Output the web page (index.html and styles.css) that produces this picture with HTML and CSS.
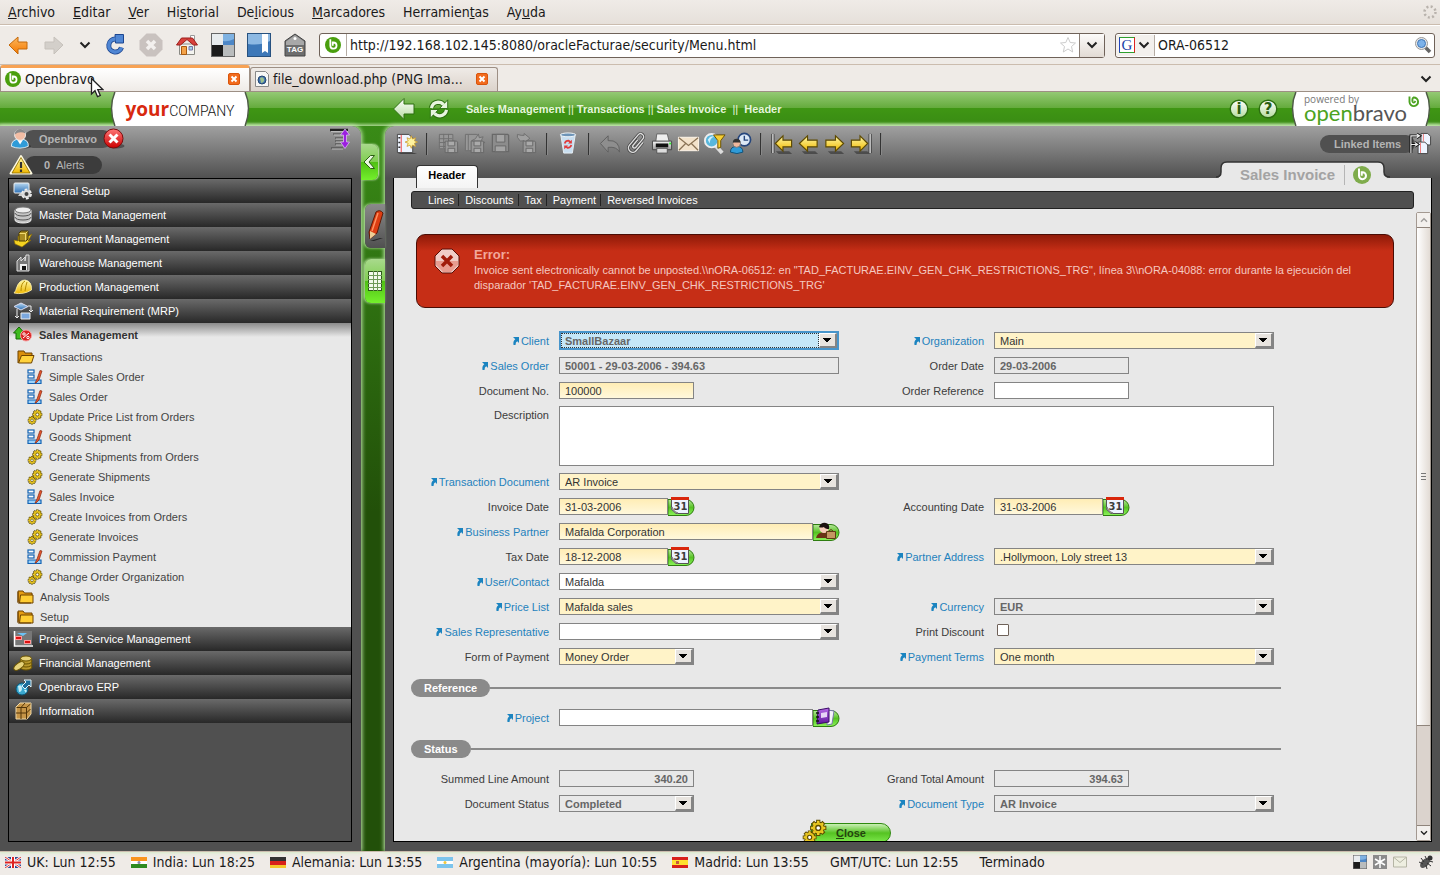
FILE: index.html
```html
<!DOCTYPE html>
<html lang="es">
<head>
    <meta charset="UTF-8">
    <meta name="viewport" content="width=device-width, initial-scale=1.0">
    <title>Openbravo</title>
    <link rel="stylesheet" href="styles.css">
</head>
<body>

    <!-- Icon sprite -->
    <svg class="sprite" width="0" height="0" aria-hidden="true">
        <defs>
            <linearGradient id="gOrange" x1="0" y1="0" x2="0" y2="1"><stop offset="0" stop-color="#fcb65c"/><stop offset="1" stop-color="#f57900"/></linearGradient>
            <linearGradient id="gBlue" x1="0" y1="0" x2="0" y2="1"><stop offset="0" stop-color="#b8d8f2"/><stop offset="1" stop-color="#2c6fb5"/></linearGradient>
            <linearGradient id="gYellow" x1="0" y1="0" x2="0" y2="1"><stop offset="0" stop-color="#fff9a8"/><stop offset="1" stop-color="#f0b800"/></linearGradient>
            <linearGradient id="gGreen" x1="0" y1="0" x2="0" y2="1"><stop offset="0" stop-color="#b9e79d"/><stop offset=".5" stop-color="#55c322"/><stop offset="1" stop-color="#8df45c"/></linearGradient>
            <linearGradient id="gGrey" x1="0" y1="0" x2="0" y2="1"><stop offset="0" stop-color="#f8f8f8"/><stop offset="1" stop-color="#9a9a9a"/></linearGradient>
            <linearGradient id="gRed" x1="0" y1="0" x2="0" y2="1"><stop offset="0" stop-color="#f77"/><stop offset="1" stop-color="#c00"/></linearGradient>
            <linearGradient id="gMint" x1="0" y1="0" x2="0" y2="1"><stop offset="0" stop-color="#fff"/><stop offset="1" stop-color="#b5dba0"/></linearGradient>
            <linearGradient id="gPurple" x1="0" y1="0" x2="0" y2="1"><stop offset="0" stop-color="#b86be8"/><stop offset="1" stop-color="#5f169c"/></linearGradient>
            <g id="disk" fill="#989898" stroke="#686868"><path d="M.5.5h12l1 1v11H.5z"/><path d="M3.500.5h7v5h-7zM3.500 8h7v4.500h-7z" fill="#aaa"/></g>
            <g id="cog">
                <path d="M-5 0H5M0-5V5M-3.500-3.500l7 7M3.500-3.500l-7 7" stroke="#5d4a00" stroke-width="2.600"/><circle r="4" fill="#5d4a00"/>
                <path d="M-4.400 0h8.800M0-4.400v8.800M-3-3l6 6M3-3l-6 6" stroke="#efcf2c" stroke-width="1.500"/><circle r="3.400" fill="#e6c31f"/>
                <circle r="1.500" fill="#fff" stroke="#5d4a00" stroke-width=".8"/>
            </g>
        </defs>

        <symbol id="ob" viewBox="0 0 18 18">
            <circle cx="9" cy="9" r="9" fill="currentColor"/>
            <path d="M6 2.500v7.300a3.500 3.500 0 1 0 3.500-3.600h-.8v3.600" fill="none" stroke="#fff" stroke-width="2"/>
        </symbol>
        <symbol id="chevron" viewBox="0 0 12 8"><path d="M1.500 1.500 6 6l4.500-4.500" fill="none" stroke="#222" stroke-width="2"/></symbol>
        <symbol id="close-tab" viewBox="0 0 12 12">
            <rect x=".5" y=".5" width="11" height="11" rx="1.500" fill="#f26b1d" stroke="#d9540b"/>
            <path d="m3.500 3.500 5 5m0-5-5 5" stroke="#fff" stroke-width="2"/>
        </symbol>
        <symbol id="nav-back" viewBox="0 0 24 24"><path d="M3 12 12 4v5h9v7h-9v5z" fill="url(#gOrange)" stroke="#c4690b"/></symbol>
        <symbol id="nav-forward" viewBox="0 0 24 24"><path d="M21 12 12 4v5H3v7h9v5z" fill="#d3cfca" stroke="#c6c1bb"/></symbol>
        <symbol id="nav-reload" viewBox="0 0 24 24">
            <path d="M18.500 14.500a6.500 6.500 0 1 1-6-8.500" fill="none" stroke="#1d4690" stroke-width="5"/>
            <path d="m12 1.500 8.500 0v8.500h-8z" fill="#4f86d4" stroke="#1d4690"/>
            <path d="M18.500 14.500a6.500 6.500 0 1 1-6-8.500" fill="none" stroke="#4f86d4" stroke-width="3.400"/>
        </symbol>
        <symbol id="nav-stop" viewBox="0 0 24 24">
            <path d="M7.500.5h9l7 7v9l-7 7h-9l-7-7v-9z" fill="#c9c2bf"/>
            <path d="m8 8 8 8m0-8-8 8" stroke="#f3f0ee" stroke-width="3.500"/>
        </symbol>
        <symbol id="nav-home" viewBox="0 0 24 24">
            <path d="M4.500 11h15v10.500h-15z" fill="#f4f4f0" stroke="#8a8a84"/>
            <path d="M15.500 2.500h4v6h-4z" fill="#fff" stroke="#999"/>
            <path d="m1.500 12 5-7h11l5 7h-4l-6.500-5.500L5.500 12z" fill="#d8413c" stroke="#9c1f1c"/>
            <path d="M6.500 13.500h5v8h-5z" fill="#f4a34a" stroke="#a85a10"/>
            <path d="M14 13.500h3.500v3.500H14z" fill="#9fd3e8" stroke="#77a"/>
        </symbol>
        <symbol id="delicious" viewBox="0 0 24 24">
            <rect width="24" height="24" fill="#666"/>
            <path d="M1 1h11v11H1z" fill="#e8ecee"/><path d="M12 1h11v11H12z" fill="#4d87c7"/><path d="M12 1h11v5q-6 3-11 2z" fill="#7fb2e2"/>
            <path d="M1 12h11v11H1z" fill="#1c1c1c"/><path d="M12 12h11v11H12z" fill="#b9bcbd"/>
        </symbol>
        <symbol id="bookmark" viewBox="0 0 24 24">
            <rect x=".5" y=".5" width="23" height="23" fill="#3d78b8" stroke="#27517f"/>
            <path d="M1 1h22v7q-10 5-22 3z" fill="#8db9e3"/>
            <path d="M15 1h6v19l-3-2-3 2z" fill="#fff"/>
        </symbol>
        <symbol id="tag" viewBox="0 0 24 24">
            <path d="M2 8 12 1l10 7v15H2z" fill="#6e6e6e" stroke="#444"/>
            <path d="M3 8.500 12 2l9 6.500V12H3z" fill="#a8a8a8"/><circle cx="12" cy="5.500" r="1.500" fill="#fff"/>
        </symbol>
        <symbol id="star" viewBox="0 0 18 18"><path d="m9 1.500 2.200 5 5.300.5-4 3.500 1.200 5.500L9 13l-4.700 3 1.200-5.500-4-3.500 5.300-.5z" fill="#fff" stroke="#ccc"/></symbol>
        <symbol id="magnifier" viewBox="0 0 18 18">
            <path d="m11 11 5 5" stroke="#666" stroke-width="3.500"/>
            <circle cx="7.500" cy="7.500" r="6" fill="#e8e8e8" stroke="#999"/><circle cx="7.500" cy="7.500" r="4" fill="#7cb2ea" stroke="#3e75b5"/>
        </symbol>
        <symbol id="png" viewBox="0 0 14 16">
            <path d="M.5.5h10l3 3v12H.5z" fill="#f7f7f5" stroke="#888"/><circle cx="7" cy="9" r="4" fill="#4173b0" stroke="#23466f"/><path d="M5 7q3-2 4 1t-3 4z" fill="#9cc08c"/>
        </symbol>
        <symbol id="spinner" viewBox="0 0 16 16">
            <circle cx="8" cy="8" r="5.500" fill="none" stroke="#b8b2ac" stroke-width="2.500" stroke-dasharray="2 2.320"/>
        </symbol>
        <symbol id="cursor" viewBox="0 0 14 21"><path d="M1.500 1.500v15.500l3.500-3.300 2.500 6 2.800-1.200-2.500-5.800H13z" fill="#fff" stroke="#222" stroke-width="1.300"/></symbol>

        <!-- Application header -->
        <symbol id="app-back" viewBox="0 0 24 24"><path d="M1.500 12 12 1.500v5.500h10v10H12v5.500z" fill="url(#gMint)" stroke="#2c6e10"/></symbol>
        <symbol id="app-refresh" viewBox="0 0 24 24">
            <g fill="none" stroke="#2c6e10" stroke-width="5.500"><path d="M3.500 11Q5 5 11 4.500q4 0 6 3M20.500 13Q19 19 13 19.500q-4 0-6-3"/></g>
            <path d="M21.500 2v9.500h-9zM2.500 22v-9.500h9z" fill="#e8f5df" stroke="#2c6e10"/>
            <g fill="none" stroke="#e8f5df" stroke-width="3.500"><path d="M3.800 11Q5 5 11 4.500q4 0 6 3M20.200 13Q19 19 13 19.500q-4 0-6-3"/></g>
        </symbol>
        <symbol id="round" viewBox="0 0 20 20"><circle cx="10" cy="10" r="8.800" fill="url(#gMint)" stroke="#2c6e10" stroke-width="1.400"/></symbol>
        <symbol id="logo-shape" viewBox="0 0 142 35">
            <path d="M4 0h134q7 16 0 35H4Q-3 16 4 0z" fill="#fff"/><path d="M4 0q-7 16 0 35M138 0q7 16 0 35" fill="none" stroke="#4c5a44" stroke-width="1.500"/>
        </symbol>
        <symbol id="swirl" viewBox="0 0 12 12"><path d="M1.500.5v5.500a4.300 4.300 0 1 0 4-4.500q-1.500.8-1 4 1 2.500 3-.5" fill="none" stroke="#4ca321" stroke-width="1.900"/></symbol>

        <!-- Left panel -->
        <symbol id="user" viewBox="0 0 24 24">
            <ellipse cx="14" cy="20" rx="9" ry="2.500" fill="#222" opacity=".5"/>
            <path d="M1.500 20q0-8 9.500-8t9 8q-9 4-18.500 0z" fill="#2f9bd8" stroke="#e8f4fb"/>
            <path d="m8 13 3 5 3-5z" fill="#fff"/>
            <circle cx="11" cy="7.500" r="6" fill="#f3bda4" stroke="#eee"/><path d="M5 7q1-6 6-6t6 5q-6-3-12 1z" fill="#8a8a8a"/>
        </symbol>
        <symbol id="logout" viewBox="0 0 22 22">
            <ellipse cx="13" cy="18" rx="8.500" ry="2.500" fill="#222" opacity=".5"/>
            <circle cx="10.500" cy="10.500" r="9.500" fill="url(#gRed)" stroke="#7c0c0c"/><path d="m6.500 6.500 8 8m0-8-8 8" stroke="#fff" stroke-width="3"/>
        </symbol>
        <symbol id="warning" viewBox="0 0 24 22">
            <path d="M12 2 22.500 19.500h-21z" fill="url(#gYellow)" stroke="#fffbe0" stroke-width="2" stroke-linejoin="round"/>
            <path d="M12 3.500 21 19H3z" fill="url(#gYellow)" stroke="#8a6a00" stroke-width=".8"/>
            <path d="M12 8v6m0 1.500V18" stroke="#333" stroke-width="2.200"/>
        </symbol>
        <symbol id="collapse-menu" viewBox="0 0 22 22">
            <path d="M1 2h18" stroke="#222" stroke-width="2.500"/><path d="M4 6h9M6 10h8M6 13h8M6 16h8M2 20h12" stroke="#444"/><path d="M2 3.500h17M5 7h8M7 11h7M7 14h7M7 17h7M3 21h11" stroke="#bbb"/>
            <path d="m16 1 4.500 6H17.500v7h3L16 20.500 11.500 14h3V7h-3z" fill="#9b1fe0" stroke="#e3c4f7" stroke-width=".7"/>
        </symbol>
        <symbol id="m-setup" viewBox="0 0 20 18">
            <rect x="1" y="1" width="15" height="10" rx="1" fill="url(#gBlue)" stroke="#eee"/><path d="M5 14h6l-1-3H7z" fill="#ccc"/>
            <circle cx="13.500" cy="12" r="3.200" fill="none" stroke="#eee" stroke-width="4.500" stroke-dasharray="2 1.350"/><circle cx="13.500" cy="12" r="3" fill="#444" stroke="#ddd" stroke-width="2"/>
        </symbol>
        <symbol id="m-data" viewBox="0 0 20 18">
            <path d="M2 4v10c0 4 16 4 16 0V4z" fill="#c5c5c5" stroke="#eee"/><path d="M2 7c0 4 16 4 16 0M2 11c0 4 16 4 16 0" fill="none" stroke="#555"/>
            <ellipse cx="10" cy="4" rx="8" ry="3" fill="#eee" stroke="#777"/>
        </symbol>
        <symbol id="m-procure" viewBox="0 0 20 18">
            <path d="m1 10 4 1V6h11l3-2-4 7 3-1-9 7-7-3z" fill="#f4d321" stroke="#8a6800" stroke-width=".6"/>
            <path d="m6 3 2-2h7v8l-2 2H6z" fill="#a98c20" stroke="#4b3b00"/><path d="M6.500 3.500h6l2-2m-2 2v7" fill="none" stroke="#f1dc70"/>
        </symbol>
        <symbol id="m-warehouse" viewBox="0 0 20 18">
            <path d="M4 7 8 3v4l4-4V7l1-6h3v16H4z" fill="#777" stroke="#ddd"/><path d="M7 10h7v6H7z" fill="#eee"/><path d="M9 12h4v4H9z" fill="#111"/>
        </symbol>
        <symbol id="m-production" viewBox="0 0 20 18">
            <path d="M1 15q2-2 2.500-5Q6 2 12 2q7 1 6.500 10-8 5-17.500 3z" fill="url(#gYellow)" stroke="#fff3b0" stroke-width=".8"/>
            <path d="M8 13q0-8 4-10M12 13q1-6 2-9" fill="none" stroke="#b48a00"/>
        </symbol>
        <symbol id="m-mrp" viewBox="0 0 20 18">
            <path d="m8 1 7 3.500L8 8 1 4.500z" fill="url(#gBlue)" stroke="#dde"/><path d="M8 11h9v6H8z" fill="#7ba8df" stroke="#eee"/>
            <path d="M4 7v9m-2-2 2 2 2-2M15 4h3v6m-2-2 2 2 2-2" fill="none" stroke="#eee"/>
        </symbol>
        <symbol id="m-sales" viewBox="0 0 20 18">
            <path d="m6 1 5.500 6H9v6H3V7H.5z" fill="#3ebb1e" stroke="#176a05"/>
            <circle cx="13" cy="9.500" r="5.500" fill="#d92424" stroke="#f6a0a0"/><path d="m10 12 6-5" stroke="#fff"/><circle cx="11" cy="8" r="1.200" fill="none" stroke="#fff"/><circle cx="15" cy="11.500" r="1.200" fill="none" stroke="#fff"/>
        </symbol>
        <symbol id="m-project" viewBox="0 0 20 18">
            <path d="M2 1h17v14H2z" fill="#777"/><path d="M1.500 1v15H20" fill="none" stroke="#fff" stroke-width="1.500"/><path d="M4 3h10l-4 3z" fill="#6cc2f5"/>
            <path d="M2 8h7M11 12h7" stroke="#f99" stroke-width="4"/><path d="M3 8h5M12 12h5" stroke="#d11" stroke-width="2"/>
        </symbol>
        <symbol id="m-finance" viewBox="0 0 20 18">
            <g fill="#b8982c" stroke="#6a5300"><ellipse cx="13" cy="13" rx="6" ry="3"/><ellipse cx="13" cy="10" rx="6" ry="3"/><ellipse cx="13" cy="7" rx="6" ry="3"/><ellipse cx="13" cy="4.500" rx="5.500" ry="2.500" fill="#e6d37c"/><ellipse cx="6" cy="12" rx="6" ry="3" transform="rotate(-35 6 12)" fill="#e6d37c"/></g>
        </symbol>
        <symbol id="m-erp" viewBox="0 0 20 18">
            <circle cx="9" cy="11" r="6" fill="#3aa8cf" stroke="#0a5373"/><path d="M5 8q4-2 4 2t-3 4zM11 12q4-1 2 3z" fill="#c5edf7"/>
            <path d="M11 2h7v7l-2-2-4 4-3-3 4-4z" fill="#1d6f9c" stroke="#e4f5fb"/>
        </symbol>
        <symbol id="m-info" viewBox="0 0 20 18">
            <path d="m3 5 4-4h11v11l-4 5H3z" fill="#c69547" stroke="#f0d9a8"/><path d="M3.500 5.500h10V17m0-11.500L17.500 2M8 17V5.500L12 1M3 11h10.500l4-4" fill="none" stroke="#523408"/>
        </symbol>
        <symbol id="folder-open" viewBox="0 0 18 14">
            <path d="M1 13V1h6l1 2h7v3" fill="#d98e0c" stroke="#6e4300"/><path d="m1.500 13 3-7.500h12.500L14.500 13z" fill="#ffd23c" stroke="#6e4300"/>
        </symbol>
        <symbol id="folder" viewBox="0 0 18 14">
            <path d="M1 12V1h5l1.500 2H15v2" fill="#e59c14" stroke="#6e4300"/><path d="M3.500 5H16v8H2.500z" fill="#ffcd33" stroke="#6e4300"/><path d="M1 2v11h13" fill="none" stroke="#6e4300"/>
        </symbol>
        <symbol id="form" viewBox="0 0 16 16">
            <g fill="#fff" stroke="#1464b4" stroke-width="1.200"><rect x="1" y="1" width="6" height="3"/><rect x="1" y="6" width="6" height="3"/><path d="M1 11h13v3.500H1z" fill="#9bd2fa"/></g>
            <path d="M13 1.500 10 10l-2 4 1 0 3-3L15 2z" fill="#e4572e" stroke="#8b2a10" stroke-width=".7"/>
        </symbol>
        <symbol id="gears" viewBox="0 0 16 16">
            <use href="#cog" transform="translate(5 11.300) scale(.85)"/><use href="#cog" transform="translate(10.300 5.500)"/>
        </symbol>

        <!-- Toolbar -->
        <symbol id="t-new" viewBox="0 0 24 24">
            <path d="M3 22h17l3 1H6z" fill="#222" opacity=".6"/>
            <path d="M2.500 2.500h12l4 4v15h-16z" fill="#eef4ff" stroke="#444"/><path d="M6.500 3v18" stroke="#e44"/><path d="M3.500 6h2m-2 5h2m-2 5h2" stroke="#333" stroke-width="1.500"/>
            <path d="m17 4 1.200 3.300L21.500 6l-1.200 3.200 3.200 1.300-3.200 1.300 1.200 3.200-3.300-1.300L17 17l-1.300-3.300-3.200 1.300 1.300-3.200-3.300-1.300 3.300-1.300L12.500 6l3.200 1.300z" fill="#fff3a0" stroke="#c99a2a" stroke-width=".8"/>
        </symbol>
        <symbol id="t-save-grid" viewBox="0 0 24 24">
            <path d="M2.500 2.500h14v15h-14zM2 7h14M2 11h14M2 15h14M7 2v15M12 2v15" fill="#989898" stroke="#707070"/><use href="#disk" x="8" y="9"/>
        </symbol>
        <symbol id="t-save-new" viewBox="0 0 24 24">
            <path d="M2.500 2.500h12l3 4v13h-15zM5.500 3v16" fill="#989898" stroke="#707070"/><path d="m16 2 1 4 4-1-2 4 4 2-5 1-3 3-2-5-4-1 4-2z" fill="#a0a0a0" stroke="#707070"/><use href="#disk" x="8" y="9"/>
        </symbol>
        <symbol id="t-save" viewBox="0 0 24 24"><path d="M3.500 2.500h16l1 1v17h-17z" fill="#8c8c8c" stroke="#686868" stroke-width="1.300"/><path d="M7.500 2.500h9v8h-9zM6.500 14.500h11v6h-11z" fill="#a4a4a4" stroke="#686868"/></symbol>
        <symbol id="t-save-close" viewBox="0 0 24 24">
            <path d="M2.500 5.500v-3l4 1h3v-2l6 5-6 5v-2.500l-4 .5z" fill="#a0a0a0" stroke="#707070"/><use href="#disk" x="8" y="9"/>
        </symbol>
        <symbol id="t-delete" viewBox="0 0 24 24">
            <path d="m4 3 3 19h9l3-19z" fill="#c8def0" stroke="#e6eef5"/><ellipse cx="11.500" cy="3" rx="8" ry="2" fill="#6d94b8" stroke="#f4f8fb"/>
            <path d="M8 12q1-3 4-3l2 1.500m1 3q-1 3-4 3l-2-1.500" fill="none" stroke="#e03a3a" stroke-width="1.800"/><path d="M15.500 8v4h-4zM7.500 18v-4h4z" fill="#e03a3a"/>
        </symbol>
        <symbol id="t-undo" viewBox="0 0 24 24"><path d="m1.500 12 8-8v5q12-1 12 12-3-6-12-5v5z" fill="#8e8e8e" stroke="#606060"/></symbol>
        <symbol id="t-attach" viewBox="0 0 24 24">
            <g fill="none" transform="rotate(40 12 12)"><path d="M16.500 7v11a4.500 4.500 0 0 1-9 0V4a3 3 0 0 1 6.500 0v12a1.800 1.800 0 0 1-3.500 0V8" stroke="#444" stroke-width="3"/><path d="M16.500 7v11a4.500 4.500 0 0 1-9 0V4a3 3 0 0 1 6.500 0v12a1.800 1.800 0 0 1-3.500 0V8" stroke="#ddd" stroke-width="1.500"/></g>
        </symbol>
        <symbol id="t-print" viewBox="0 0 24 24">
            <path d="M6 2h11l2 8H5z" fill="#eee" stroke="#666"/><path d="M1.500 9.500h20v9h-20z" fill="url(#gGrey)" stroke="#444"/><path d="M5 12h13v4H5z" fill="#111"/><path d="M6 17h11v5H6z" fill="#ddd" stroke="#555"/><path d="M19 12h2" stroke="#3e3" stroke-width="2"/>
        </symbol>
        <symbol id="t-mail" viewBox="0 0 24 24">
            <path d="M1.500 5.500h21v14h-21z" fill="#f3e3cb" stroke="#fff7ea"/><path d="m2 6 10 8L22 6M2 19l7-7m13 7-7-7" fill="none" stroke="#8a7355" stroke-width="1.300"/>
        </symbol>
        <symbol id="t-find" viewBox="0 0 24 24">
            <path d="m13 14 7 8" stroke="#ddd" stroke-width="4"/><circle cx="9" cy="9" r="7" fill="#58b7dc" stroke="#eee" stroke-width="2"/><path d="M5 8q3-5 7-3-5 1-5 7z" fill="#cdeffc"/>
            <path d="M11 3h12l-4.500 6v7l-3 1V9z" fill="#f6cf35" stroke="#6b5200"/>
        </symbol>
        <symbol id="t-audit" viewBox="0 0 24 24">
            <circle cx="16" cy="8" r="6.500" fill="#dce8f6" stroke="#26467c" stroke-width="1.800"/><path d="M16 4v4.500h4" fill="none" stroke="#26467c" stroke-width="1.500"/>
            <path d="M1.500 21q0-6 6.500-6t6.500 6q-6 3-13 0z" fill="#2f9bd8" stroke="#124e74"/><circle cx="8" cy="12" r="4" fill="#f0b79c" stroke="#777"/><path d="M4 11q0-4 4-4t4 4z" fill="#333"/>
        </symbol>
        <symbol id="t-prev" viewBox="0 0 24 24"><path d="M5 20h14l3 3H8z" fill="#222" opacity=".5"/><path d="m2.500 12 8.500-8v4.500h10v7H11V20z" fill="url(#gYellow)" stroke="#5e4a00" stroke-width="1.200"/></symbol>
        <symbol id="t-next" viewBox="0 0 24 24"><path d="M5 20h14l3 3H8z" fill="#222" opacity=".5"/><path d="m21.500 12-8.500-8v4.500H3v7h10V20z" fill="url(#gYellow)" stroke="#5e4a00" stroke-width="1.200"/></symbol>
        <symbol id="t-first" viewBox="0 0 24 24"><path d="M5 20h14l3 3H8z" fill="#222" opacity=".5"/><path d="M2 2v20" stroke="#222" stroke-width="3"/><path d="M2 2v20" stroke="#eee" stroke-width="1.400"/><path d="m4.500 12 8-8v4.500h9v7h-9V20z" fill="url(#gYellow)" stroke="#5e4a00" stroke-width="1.200"/></symbol>
        <symbol id="t-last" viewBox="0 0 24 24"><path d="M5 20h14l3 3H8z" fill="#222" opacity=".5"/><path d="M22 2v20" stroke="#222" stroke-width="3"/><path d="M22 2v20" stroke="#eee" stroke-width="1.400"/><path d="m19.500 12-8-8v4.500h-9v7h9V20z" fill="url(#gYellow)" stroke="#5e4a00" stroke-width="1.200"/></symbol>
        <symbol id="linked" viewBox="0 0 24 24">
            <path d="M12.500 1.500h7l3 3v9h-10z" fill="#eef4ff" stroke="#444"/><path d="M9.500 10.500h7l3 3v9h-10z" fill="#eef4ff" stroke="#444"/><path d="M15 2v8M12 11v11" stroke="#e77"/>
            <path d="M2 22V4h8M2 13h6M8 2l3 2-3 2M6 11l3 2-3 2" fill="none" stroke="#111" stroke-width="3"/><path d="M2 22V4h8M2 13h6M8 2l3 2-3 2M6 11l3 2-3 2" fill="none" stroke="#eee" stroke-width="1.200"/>
        </symbol>

        <!-- Side strip -->
        <symbol id="hide" viewBox="0 0 14 16"><path d="M11.500 1.500h-4L1 8l6.500 6.500h4L6 8z" fill="#e9f6e0" stroke="#2c5e14"/></symbol>
        <symbol id="pencil" viewBox="0 0 18 34">
            <path d="m4 32 10-3 3 0-9 3z" fill="#111" opacity=".7"/><path d="M10 3q4-3 7 1l-6 20-7 6-1-7z" fill="#dd3d12" stroke="#5e1a06"/><path d="m4 22 6 3-6 5z" fill="#efcf96"/><path d="m12 4-6 18" stroke="#ff9060" stroke-width="1.500"/>
        </symbol>
        <symbol id="grid" viewBox="0 0 14 20">
            <rect x=".5" y=".5" width="13" height="19" fill="#f2faec" stroke="#2f5a1a"/><path d="M5.500 0v20M9.500 0v20M0 4.500h14M0 8.500h14M0 12.500h14M0 16.500h14" stroke="#6d9957"/>
        </symbol>

        <!-- Form -->
        <symbol id="err" viewBox="0 0 26 26">
            <path d="M8 1h10l7 7v10l-7 7H8l-7-7V8z" fill="#f0cdc7" stroke="#5a0d04"/><path d="M2 13h22v4l-7 7H9l-7-7z" fill="#e79c90"/><path d="m8 8 10 10m0-10L8 18" stroke="#a01c0b" stroke-width="3.500"/>
        </symbol>
        <symbol id="goto" viewBox="0 0 7 8"><path d="M1 0h6v6L5.300 4.300Q3.500 5 3.500 8H1.500Q.8 4 3.300 2.300z" fill="#1b84c0"/></symbol>
        <symbol id="calendar" viewBox="0 0 28 22">
            <path d="M0 3.500h18a8 8 0 0 1 0 16H0z" fill="url(#gGreen)" stroke="#2e7d10"/>
            <path d="M3.500 2.500h17v15H8l-4.500-4z" fill="#eef3ff" stroke="#555"/><path d="M3 1h18v3H3z" fill="#d9260b"/><path d="M4 11q1 5 6 6" fill="none" stroke="#888" stroke-width="1.500"/>
        </symbol>
        <symbol id="partner" viewBox="0 0 28 22">
            <path d="M0 3.500h18a8 8 0 0 1 0 16H0z" fill="url(#gGreen)" stroke="#2e7d10"/>
            <path d="M3 17q1-6 9-6 5 1 5 6z" fill="#6b3414"/><circle cx="11" cy="7.500" r="4.500" fill="#f7cdb9"/><path d="M6 6q2-5 7-4 4 1 3 6-4 0-5-2-3 1-5 0z" fill="#1c1210"/><path d="M13.500 10.500h9v7h-9z" fill="#c49662" stroke="#5f3b16"/><path d="M16 10q2-3 4 0" fill="none" stroke="#5f3b16"/>
        </symbol>
        <symbol id="project" viewBox="0 0 28 22">
            <path d="M0 3.500h18a8 8 0 0 1 0 16H0z" fill="url(#gGreen)" stroke="#2e7d10"/>
            <path d="m15 3 6 1-2 13-5 1z" fill="#f4f4fb" stroke="#77a"/><path d="m5 3 11-2v14L4 17z" fill="url(#gPurple)" stroke="#3b0c66"/><path d="m8 6 6-1v5l-6 1z" fill="#e7d5f6"/><path d="M3 6h3M3 10h3M3 14h3" stroke="#111" stroke-width="1.500"/>
        </symbol>

        <!-- Flags -->
        <symbol id="f-uk" viewBox="0 0 16 11"><path d="M0 0h16v11H0z" fill="#33478f"/><path d="m0 0 16 11M16 0 0 11" stroke="#fff" stroke-width="2.500"/><path d="m0 0 16 11M16 0 0 11" stroke="#d33"/><path d="M8 0v11M0 5.500h16" stroke="#fff" stroke-width="4"/><path d="M8 0v11M0 5.500h16" stroke="#d22" stroke-width="2"/></symbol>
        <symbol id="f-in" viewBox="0 0 16 11"><path d="M0 0h16v4H0z" fill="#f9951f"/><path d="M0 4h16v3H0z" fill="#fff"/><path d="M0 7h16v4H0z" fill="#2e8b20"/><circle cx="8" cy="5.500" r="1.500" fill="#88a"/></symbol>
        <symbol id="f-de" viewBox="0 0 16 11"><path d="M0 0h16v4H0z" fill="#333"/><path d="M0 4h16v4H0z" fill="#d8201a"/><path d="M0 8h16v3H0z" fill="#f4c72c"/></symbol>
        <symbol id="f-ar" viewBox="0 0 16 11"><path d="M0 0h16v11H0z" fill="#7cc4ec"/><path d="M0 4h16v3H0z" fill="#fff"/><circle cx="8" cy="5.500" r="1.500" fill="#f1c93a"/></symbol>
        <symbol id="f-es" viewBox="0 0 16 11"><path d="M0 0h16v11H0z" fill="#d8201a"/><path d="M0 3h16v5H0z" fill="#ffe02e"/><path d="M4 4h3v3H4z" fill="#c65a3a"/></symbol>
        <symbol id="s-flake" viewBox="0 0 14 14"><path d="M0 0h14v14H0z" fill="#8b8b8b"/><path d="M7 1v12M2 4l10 6M12 4 2 10" stroke="#fff" stroke-width="1.500"/></symbol>
        <symbol id="s-mail" viewBox="0 0 14 11"><path d="M.5.5h13v10H.5z" fill="#eeeee0" stroke="#b5b5a5"/><path d="m1 1 6 5 6-5" fill="none" stroke="#b5b5a5"/></symbol>
        <symbol id="s-bug" viewBox="0 0 16 16"><ellipse cx="7" cy="9" rx="3.500" ry="6" transform="rotate(45 7 9)" fill="#555"/><circle cx="12" cy="4" r="2.500" fill="#333"/><path d="M3 4l3 4M7 2l2 4M1 8l4 2M9 15l-1-4M13 12l-4-3M15 8l-4-1" stroke="#333"/></symbol>
    </svg>

    <!-- Browser chrome -->
    <header class="browser">
        <nav class="menubar">
            <a href="#"><u>A</u>rchivo</a>
            <a href="#"><u>E</u>ditar</a>
            <a href="#"><u>V</u>er</a>
            <a href="#">Hi<u>s</u>torial</a>
            <a href="#">De<u>l</u>icious</a>
            <a href="#"><u>M</u>arcadores</a>
            <a href="#">Herramien<u>t</u>as</a>
            <a href="#">Ay<u>u</u>da</a>
            <svg class="spinner"><use href="#spinner"/></svg>
        </nav>
        <div class="navbar">
            <div class="nav-buttons">
                <button aria-label="Atrás"><svg><use href="#nav-back"/></svg></button>
                <button aria-label="Adelante"><svg><use href="#nav-forward"/></svg></button>
                <button class="narrow" aria-label="Páginas recientes"><svg class="chevron"><use href="#chevron"/></svg></button>
                <button aria-label="Recargar"><svg><use href="#nav-reload"/></svg></button>
                <button aria-label="Detener"><svg><use href="#nav-stop"/></svg></button>
                <button aria-label="Inicio"><svg><use href="#nav-home"/></svg></button>
                <button aria-label="Delicious"><svg><use href="#delicious"/></svg></button>
                <button aria-label="Marcadores"><svg><use href="#bookmark"/></svg></button>
                <button class="tag"><svg><use href="#tag"/></svg><span>TAG</span></button>
            </div>
            <div class="url-box">
                <span class="url-icon"><svg class="ob"><use href="#ob"/></svg></span>
                <input type="text" aria-label="Dirección" value="http://192.168.102.145:8080/oracleFacturae/security/Menu.html">
                <svg class="star"><use href="#star"/></svg>
                <button aria-label="Historial de direcciones"><svg class="chevron"><use href="#chevron"/></svg></button>
            </div>
            <div class="search-box">
                <button aria-label="Motor de búsqueda"><span class="google">G</span><svg class="chevron"><use href="#chevron"/></svg></button>
                <input type="text" aria-label="Buscar" value="ORA-06512">
                <svg class="magnifier"><use href="#magnifier"/></svg>
            </div>
        </div>
        <div class="tabbar">
            <div class="tab active">
                <svg class="ob"><use href="#ob"/></svg>
                <span>Openbravo</span>
                <button aria-label="Cerrar pestaña"><svg class="x"><use href="#close-tab"/></svg></button>
                <svg class="cursor"><use href="#cursor"/></svg>
            </div>
            <div class="tab">
                <svg class="png"><use href="#png"/></svg>
                <span>file_download.php (PNG Ima...</span>
                <button aria-label="Cerrar pestaña"><svg class="x"><use href="#close-tab"/></svg></button>
            </div>
            <button class="all-tabs" aria-label="Todas las pestañas"><svg class="chevron"><use href="#chevron"/></svg></button>
        </div>
    </header>

    <!-- Openbravo -->
    <div class="app">
        <header class="app-header">
            <div class="company">
                <svg class="shape"><use href="#logo-shape"/></svg>
                <b>your</b><span>COMPANY</span>
            </div>
            <button class="app-back" aria-label="Back"><svg><use href="#app-back"/></svg></button>
            <button class="app-refresh" aria-label="Refresh"><svg><use href="#app-refresh"/></svg></button>
            <div class="breadcrumb">Sales Management <i>||</i> Transactions <i>||</i> Sales Invoice &nbsp;<i>||</i>&nbsp; Header</div>
            <button class="round" aria-label="About"><svg><use href="#round"/></svg><span>i</span></button>
            <button class="round" aria-label="Help"><svg><use href="#round"/></svg><span>?</span></button>
            <div class="powered">
                <svg class="shape"><use href="#logo-shape"/></svg>
                <small>powered by</small>
                <div class="brand"><em>open</em>bravo</div>
                <svg class="swirl"><use href="#swirl"/></svg>
            </div>
        </header>

        <div class="app-body">
            <aside class="left-panel">
                <div class="user-area">
                    <div class="user-row">
                        <svg class="user-icon"><use href="#user"/></svg>
                        <span class="pill user-pill">Openbravo</span>
                        <button class="logout" aria-label="Log out"><svg><use href="#logout"/></svg></button>
                        <button class="collapse" aria-label="Collapse menu"><svg><use href="#collapse-menu"/></svg></button>
                    </div>
                    <div class="user-row">
                        <svg class="user-icon"><use href="#warning"/></svg>
                        <span class="pill alert-pill"><b>0</b> &nbsp;Alerts</span>
                    </div>
                </div>
                <nav class="menu">
                    <a class="group" href="#"><svg><use href="#m-setup"/></svg>General Setup</a>
                    <a class="group" href="#"><svg><use href="#m-data"/></svg>Master Data Management</a>
                    <a class="group" href="#"><svg><use href="#m-procure"/></svg>Procurement Management</a>
                    <a class="group" href="#"><svg><use href="#m-warehouse"/></svg>Warehouse Management</a>
                    <a class="group" href="#"><svg><use href="#m-production"/></svg>Production Management</a>
                    <a class="group" href="#"><svg><use href="#m-mrp"/></svg>Material Requirement (MRP)</a>
                    <a class="group open" href="#"><svg><use href="#m-sales"/></svg>Sales Management</a>
                    <div class="submenu">
                        <a class="folder" href="#"><svg><use href="#folder-open"/></svg>Transactions</a>
                        <a href="#"><svg><use href="#form"/></svg>Simple Sales Order</a>
                        <a href="#"><svg><use href="#form"/></svg>Sales Order</a>
                        <a href="#"><svg><use href="#gears"/></svg>Update Price List from Orders</a>
                        <a href="#"><svg><use href="#form"/></svg>Goods Shipment</a>
                        <a href="#"><svg><use href="#gears"/></svg>Create Shipments from Orders</a>
                        <a href="#"><svg><use href="#gears"/></svg>Generate Shipments</a>
                        <a href="#"><svg><use href="#form"/></svg>Sales Invoice</a>
                        <a href="#"><svg><use href="#gears"/></svg>Create Invoices from Orders</a>
                        <a href="#"><svg><use href="#gears"/></svg>Generate Invoices</a>
                        <a href="#"><svg><use href="#form"/></svg>Commission Payment</a>
                        <a href="#"><svg><use href="#gears"/></svg>Change Order Organization</a>
                        <a class="folder" href="#"><svg><use href="#folder"/></svg>Analysis Tools</a>
                        <a class="folder" href="#"><svg><use href="#folder"/></svg>Setup</a>
                    </div>
                    <a class="group" href="#"><svg><use href="#m-project"/></svg>Project &amp; Service Management</a>
                    <a class="group" href="#"><svg><use href="#m-finance"/></svg>Financial Management</a>
                    <a class="group" href="#"><svg><use href="#m-erp"/></svg>Openbravo ERP</a>
                    <a class="group" href="#"><svg><use href="#m-info"/></svg>Information</a>
                </nav>
            </aside>

            <div class="strip">
                <button class="hide-menu" aria-label="Hide menu"><svg><use href="#hide"/></svg></button>
                <button class="edit-view" aria-label="Form view"><svg><use href="#pencil"/></svg></button>
                <button class="grid-view" aria-label="Grid view"><svg><use href="#grid"/></svg></button>
            </div>

            <main class="right-panel">
                <div class="toolbar">
                    <button aria-label="New"><svg><use href="#t-new"/></svg></button>
                    <span class="sep"></span>
                    <button aria-label="Save and grid" disabled><svg><use href="#t-save-grid"/></svg></button>
                    <button aria-label="Save and new" disabled><svg><use href="#t-save-new"/></svg></button>
                    <button aria-label="Save" disabled><svg><use href="#t-save"/></svg></button>
                    <button aria-label="Save and next" disabled><svg><use href="#t-save-close"/></svg></button>
                    <span class="sep"></span>
                    <button aria-label="Delete"><svg><use href="#t-delete"/></svg></button>
                    <span class="sep"></span>
                    <button aria-label="Undo" disabled><svg><use href="#t-undo"/></svg></button>
                    <button aria-label="Attachments"><svg><use href="#t-attach"/></svg></button>
                    <button aria-label="Print"><svg><use href="#t-print"/></svg></button>
                    <button aria-label="Email"><svg><use href="#t-mail"/></svg></button>
                    <button aria-label="Search"><svg><use href="#t-find"/></svg></button>
                    <button aria-label="Audit trail"><svg><use href="#t-audit"/></svg></button>
                    <span class="sep"></span>
                    <button aria-label="First"><svg><use href="#t-first"/></svg></button>
                    <button aria-label="Previous"><svg><use href="#t-prev"/></svg></button>
                    <button aria-label="Next"><svg><use href="#t-next"/></svg></button>
                    <button aria-label="Last"><svg><use href="#t-last"/></svg></button>
                    <span class="sep"></span>
                    <a class="linked" href="#"><span class="pill">Linked Items</span><svg><use href="#linked"/></svg></a>
                </div>

                <div class="tab-row">
                    <a class="header-tab" href="#">Header</a>
                    <div class="title-tab">
                        <svg class="title-shape" viewBox="0 0 176 18"><path d="M0 17q5 0 5-6V7q0-6 6-6h151q6 0 6 6v4q0 6 6 6z" fill="#e8e8e8"/><path d="M0 16q5 0 5-5V7q0-6 6-6h151q6 0 6 6v4q0 5 6 5" fill="none" stroke="#333" stroke-width="1.500"/></svg>
                        <span>Sales Invoice</span>
                        <svg class="ob"><use href="#ob"/></svg>
                    </div>
                </div>

                <div class="content">
                    <nav class="subtabs">
                        <a href="#">Lines</a>
                        <a href="#">Discounts</a>
                        <a href="#">Tax</a>
                        <a href="#">Payment</a>
                        <a href="#">Reversed Invoices</a>
                    </nav>

                    <div class="scroll-area">
                        <div class="form-body">
                            <div class="error-box">
                                <svg><use href="#err"/></svg>
                                <div>
                                    <strong>Error:</strong>
                                    <p>Invoice sent electronically cannot be unposted.\\nORA-06512: en "TAD_FACTURAE.EINV_GEN_CHK_RESTRICTIONS_TRG", línea 3\\nORA-04088: error durante la ejecución del disparador 'TAD_FACTURAE.EINV_GEN_CHK_RESTRICTIONS_TRG'</p>
                                </div>
                            </div>

                            <form>
                                <div class="row">
                                    <label for="client"><a href="#"><svg><use href="#goto"/></svg>Client</a></label>
                                    <div class="select focused readonly"><select id="client"><option>SmallBazaar</option></select></div>
                                    <label for="organization"><a href="#"><svg><use href="#goto"/></svg>Organization</a></label>
                                    <div class="select required"><select id="organization"><option>Main</option></select></div>
                                </div>
                                <div class="row">
                                    <label for="salesOrder"><a href="#"><svg><use href="#goto"/></svg>Sales Order</a></label>
                                    <input type="text" id="salesOrder" class="readonly" value="50001 - 29-03-2006 - 394.63" readonly>
                                    <label for="orderDate">Order Date</label>
                                    <input type="text" id="orderDate" class="readonly short" value="29-03-2006" readonly>
                                </div>
                                <div class="row">
                                    <label for="documentNo">Document No.</label>
                                    <input type="text" id="documentNo" class="required short" value="100000">
                                    <label for="orderReference">Order Reference</label>
                                    <input type="text" id="orderReference" class="short">
                                </div>
                                <div class="row tall">
                                    <label for="description">Description</label>
                                    <textarea id="description"></textarea>
                                </div>
                                <div class="row">
                                    <label for="transDocument"><a href="#"><svg><use href="#goto"/></svg>Transaction Document</a></label>
                                    <div class="select required"><select id="transDocument"><option>AR Invoice</option></select></div>
                                </div>
                                <div class="row">
                                    <label for="invoiceDate">Invoice Date</label>
                                    <div class="picker short"><input type="text" id="invoiceDate" class="required" value="31-03-2006"><button type="button"><svg><use href="#calendar"/></svg><span>31</span></button></div>
                                    <label for="accountingDate">Accounting Date</label>
                                    <div class="picker short"><input type="text" id="accountingDate" class="required" value="31-03-2006"><button type="button"><svg><use href="#calendar"/></svg><span>31</span></button></div>
                                </div>
                                <div class="row">
                                    <label for="businessPartner"><a href="#"><svg><use href="#goto"/></svg>Business Partner</a></label>
                                    <div class="picker"><input type="text" id="businessPartner" class="required" value="Mafalda Corporation"><button type="button" aria-label="Select partner"><svg><use href="#partner"/></svg></button></div>
                                </div>
                                <div class="row">
                                    <label for="taxDate">Tax Date</label>
                                    <div class="picker short"><input type="text" id="taxDate" class="required" value="18-12-2008"><button type="button"><svg><use href="#calendar"/></svg><span>31</span></button></div>
                                    <label for="partnerAddress"><a href="#"><svg><use href="#goto"/></svg>Partner Address</a></label>
                                    <div class="select required"><select id="partnerAddress"><option>.Hollymoon, Loly street 13</option></select></div>
                                </div>
                                <div class="row">
                                    <label for="userContact"><a href="#"><svg><use href="#goto"/></svg>User/Contact</a></label>
                                    <div class="select"><select id="userContact"><option>Mafalda</option></select></div>
                                </div>
                                <div class="row">
                                    <label for="priceList"><a href="#"><svg><use href="#goto"/></svg>Price List</a></label>
                                    <div class="select required"><select id="priceList"><option>Mafalda sales</option></select></div>
                                    <label for="currency"><a href="#"><svg><use href="#goto"/></svg>Currency</a></label>
                                    <div class="select readonly"><select id="currency"><option>EUR</option></select></div>
                                </div>
                                <div class="row">
                                    <label for="salesRep"><a href="#"><svg><use href="#goto"/></svg>Sales Representative</a></label>
                                    <div class="select"><select id="salesRep"><option></option></select></div>
                                    <label for="printDiscount">Print Discount</label>
                                    <input type="checkbox" id="printDiscount">
                                </div>
                                <div class="row">
                                    <label for="formOfPayment">Form of Payment</label>
                                    <div class="select required short"><select id="formOfPayment"><option>Money Order</option></select></div>
                                    <label for="paymentTerms"><a href="#"><svg><use href="#goto"/></svg>Payment Terms</a></label>
                                    <div class="select required"><select id="paymentTerms"><option>One month</option></select></div>
                                </div>

                                <h2><span>Reference</span></h2>
                                <div class="row">
                                    <label for="projectField"><a href="#"><svg><use href="#goto"/></svg>Project</a></label>
                                    <div class="picker"><input type="text" id="projectField"><button type="button" aria-label="Select project"><svg><use href="#project"/></svg></button></div>
                                </div>

                                <h2><span>Status</span></h2>
                                <div class="row">
                                    <label for="summedLine">Summed Line Amount</label>
                                    <input type="text" id="summedLine" class="readonly short amount" value="340.20" readonly>
                                    <label for="grandTotal">Grand Total Amount</label>
                                    <input type="text" id="grandTotal" class="readonly short amount" value="394.63" readonly>
                                </div>
                                <div class="row">
                                    <label for="docStatus">Document Status</label>
                                    <div class="select readonly short"><select id="docStatus"><option>Completed</option></select></div>
                                    <label for="docType"><a href="#"><svg><use href="#goto"/></svg>Document Type</a></label>
                                    <div class="select readonly"><select id="docType"><option>AR Invoice</option></select></div>
                                </div>
                                <button type="button" class="close-button"><svg><use href="#gears"/></svg><span><u>C</u>lose</span></button>
                            </form>
                        </div>
                        <div class="scrollbar">
                            <div class="arrow"><svg class="up"><use href="#chevron"/></svg></div>
                            <div class="thumb"><i></i><i></i><i></i></div>
                            <div class="track"></div>
                            <div class="arrow"><svg><use href="#chevron"/></svg></div>
                        </div>
                    </div>
                </div>
            </main>
        </div>
    </div>

    <!-- Status bar with world clocks -->
    <footer class="statusbar">
        <span><svg><use href="#f-uk"/></svg>UK: Lun 12:55</span>
        <span><svg><use href="#f-in"/></svg>India: Lun 18:25</span>
        <span><svg><use href="#f-de"/></svg>Alemania: Lun 13:55</span>
        <span><svg><use href="#f-ar"/></svg>Argentina (mayoría): Lun 10:55</span>
        <span><svg><use href="#f-es"/></svg>Madrid: Lun 13:55</span>
        <span class="plain">GMT/UTC: Lun 12:55</span>
        <span class="plain">Terminado</span>
        <div class="status-icons">
            <svg><use href="#delicious"/></svg>
            <svg><use href="#s-flake"/></svg>
            <svg><use href="#s-mail"/></svg>
            <svg class="bug"><use href="#s-bug"/></svg>
        </div>
    </footer>

</body>
</html>
```
FILE: styles.css
```css
* {
    box-sizing: border-box;
}
body {
    margin: 0;
    height: 100vh;
    display: flex;
    flex-direction: column;
    overflow: hidden;
    font-family: "DejaVu Sans Condensed", "DejaVu Sans", sans-serif;
    font-size: 14px;
    color: #1a1a1a;
    background-color: #efebe7;
}
a {
    color: inherit;
    text-decoration: none;
}
button {
    padding: 0;
    border: none;
    background: none;
    font: inherit;
    color: inherit;
    cursor: pointer;
}
svg {
    display: block;
    flex: none;
}
.sprite {
    position: absolute;
}
.chevron {
    width: 12px;
    height: 8px;
}
.ob {
    width: 16px;
    height: 16px;
    color: #4a9f0e;
}

/* Browser chrome */
.menubar {
    display: flex;
    align-items: center;
    gap: 18px;
    height: 25px;
    padding: 0 8px;
    background: linear-gradient(#efebe7, #e6e0da);
    border-bottom: 1px solid #cbbcae;
}
.spinner {
    width: 16px;
    height: 16px;
    margin-left: auto;
    margin-right: -6px;
}
.navbar {
    display: flex;
    align-items: center;
    height: 40px;
    padding-right: 5px;
    border-top: 1px solid #fff;
    border-bottom: 1px solid #cbbcae;
}
.nav-buttons {
    display: flex;
    width: 319px;
}
.nav-buttons button {
    position: relative;
    display: flex;
    align-items: center;
    justify-content: center;
    width: 36px;
    height: 28px;
}
.nav-buttons button svg {
    width: 24px;
    height: 24px;
}
.nav-buttons .narrow {
    width: 25px;
}
.nav-buttons .narrow svg {
    width: 12px;
    height: 8px;
}
.nav-buttons .tag span {
    position: absolute;
    left: 0;
    right: 0;
    bottom: 4px;
    color: #fff;
    font: bold 8px/10px "Liberation Sans", Arial, sans-serif;
}
.url-box,
.search-box {
    display: flex;
    align-items: center;
    height: 25px;
    background-color: #fff;
    border: 1px solid #6f6259;
    border-radius: 3px;
}
.url-box {
    flex: 1;
    margin-right: 10px;
}
.search-box {
    width: 320px;
    padding-right: 2px;
}
.url-icon {
    padding: 3px 5px;
    border-right: 1px solid #b5aca4;
}
.url-box input,
.search-box input {
    flex: 1;
    min-width: 0;
    padding: 0 0 0 3px;
    border: none;
    outline: none;
    background: none;
    font: inherit;
    color: inherit;
}
.star,
.magnifier {
    width: 18px;
    height: 18px;
}
.star {
    margin-right: 2px;
}
.url-box button {
    display: flex;
    align-items: center;
    justify-content: center;
    width: 25px;
    height: 23px;
    border-left: 1px solid #8b7f76;
    background: linear-gradient(#fcfbfa, #e2dbd4);
}
.search-box button {
    display: flex;
    align-items: center;
    gap: 3px;
    height: 21px;
    padding: 0 4px 0 3px;
    background-color: #f3f0ed;
    border-right: 1px solid #b5aca4;
}
.google {
    width: 16px;
    height: 16px;
    border: 1px solid;
    border-color: #2ea02e #d22 #2ea02e #24b;
    background-color: #fff;
    color: #1a3fa8;
    font: 15px/14px "Liberation Serif", serif;
}
.tabbar {
    display: flex;
    align-items: flex-end;
    height: 27px;
    border-bottom: 1px solid #9d8f84;
}
.tab {
    position: relative;
    display: flex;
    align-items: center;
    width: 248px;
    height: 24px;
    padding: 0 9px 1px 4px;
    background: linear-gradient(#efebe7, #dcd3cb);
    border: 1px solid #9d8f84;
    border-bottom: none;
    border-radius: 3px 3px 0 0;
}
.tab.active {
    width: 250px;
    height: 26px;
    padding-bottom: 2px;
    background: linear-gradient(#fff, #efebe7);
    border-top: 3px solid #f7a254;
}
.tab span {
    flex: 1;
    padding-left: 4px;
    white-space: nowrap;
}
.png {
    width: 14px;
    height: 16px;
}
.x {
    width: 12px;
    height: 12px;
}
.cursor {
    position: absolute;
    left: 89px;
    top: 9px;
    width: 14px;
    height: 21px;
    z-index: 5;
}
.all-tabs {
    margin: 0 8px 8px auto;
}

/* Application */
.app {
    flex: 1;
    min-height: 0;
    display: flex;
    flex-direction: column;
    font: 11px "Liberation Sans", Arial, sans-serif;
    background: linear-gradient(#3b9018, #225009 420px);
}
.app-header {
    display: flex;
    align-items: center;
    height: 34px;
    padding-right: 8px;
    background: linear-gradient(#94c974, #64ab3c 16px, #3f9614 16px, #3a8d14 30px, #a6d48c);
}
.app-header .shape {
    position: absolute;
    inset: 0;
    width: 142px;
    height: 34px;
    z-index: -1;
}
.company {
    position: relative;
    z-index: 1;
    display: flex;
    align-items: baseline;
    justify-content: center;
    width: 142px;
    height: 34px;
    margin-left: 109px;
    line-height: 34px;
    color: #111;
    font-family: Roboto, sans-serif;
    font-size: 14px;
    font-weight: 300;
}
.company b {
    font: bold 19px/34px "Open Sans", sans-serif;
    color: #d8290f;
}
.app-back {
    margin-left: 141px;
}
.app-back svg {
    width: 24px;
    height: 24px;
}
.app-refresh {
    margin-left: 12px;
}
.app-refresh svg {
    width: 22px;
    height: 22px;
}
.breadcrumb {
    flex: 1;
    margin-left: 16px;
    font-weight: bold;
    color: #e6f5dc;
}
.breadcrumb i {
    font-style: normal;
    font-weight: normal;
}
.round {
    position: relative;
    width: 20px;
    height: 20px;
    margin-right: 9px;
    color: #2b5d12;
}
.round svg {
    width: 20px;
    height: 20px;
}
.round span {
    position: absolute;
    inset: 0;
    font: bold 15px/20px "DejaVu Sans", sans-serif;
}
.powered {
    position: relative;
    z-index: 1;
    width: 142px;
    height: 34px;
    margin-left: 3px;
    padding: 2px 0 0 14px;
    color: #777;
}
.powered small {
    display: block;
    font: 10px/10px "Open Sans", sans-serif;
}
.brand {
    font: 22px/18px Lato, sans-serif;
    color: #555;
}
.brand em {
    font-style: normal;
    color: #4ca321;
}
.swirl {
    position: absolute;
    right: 12px;
    top: 4px;
    width: 12px;
    height: 12px;
}
.app-body {
    flex: 1;
    min-height: 0;
    display: flex;
}
.pill {
    display: flex;
    align-items: center;
    height: 18px;
    border-radius: 9px;
    background-color: #505050;
    color: #b4b4b4;
    font-weight: bold;
}

/* Left panel */
.left-panel {
    display: flex;
    flex-direction: column;
    width: 361px;
    padding: 0 9px 9px 8px;
    border-radius: 0 9px 0 0;
    background: linear-gradient(#a0a0a0, #505050 52px);
    box-shadow: 0 0 4px 1px #c8ecb4;
}
.user-area {
    height: 52px;
}
.user-row {
    display: flex;
    align-items: center;
    height: 26px;
}
.user-icon {
    width: 24px;
    height: 22px;
    margin-left: 1px;
    z-index: 1;
}
.user-pill {
    width: 88px;
    margin-left: -9px;
    padding-left: 15px;
}
.alert-pill {
    width: 77px;
    margin-left: -8px;
    padding-left: 19px;
    background-color: #3c3c3c;
    font-weight: normal;
    white-space: pre;
}
.logout {
    margin-left: -9px;
    z-index: 1;
}
.logout svg {
    width: 22px;
    height: 22px;
}
.collapse {
    margin: 0 1px 0 auto;
}
.collapse svg {
    width: 22px;
    height: 22px;
}
.menu {
    flex: 1;
    border: 1px solid #000;
}
.menu a {
    display: flex;
    align-items: center;
}
.menu .group {
    height: 24px;
    padding-left: 4px;
    background: linear-gradient(#6a6a6a, #282828);
    color: #fff;
}
.menu .group svg {
    width: 20px;
    height: 18px;
    margin-right: 6px;
}
.menu .group.open {
    background: linear-gradient(#8a8a8a, #e8e8e8 14px);
    color: #333;
    font-weight: bold;
}
.submenu {
    background-color: #e8e8e8;
    color: #444;
}
.submenu a {
    height: 20px;
    padding-left: 18px;
}
.submenu a svg {
    width: 16px;
    height: 16px;
    margin-right: 6px;
}
.submenu .folder {
    padding-left: 8px;
}
.submenu .folder svg {
    width: 18px;
    height: 14px;
    margin-right: 5px;
}

/* Green strip between the panels */
.strip {
    display: flex;
    flex-direction: column;
    width: 24px;
    z-index: 2;
}
.strip button {
    display: flex;
    align-items: center;
    justify-content: center;
}
.hide-menu {
    width: 17px;
    height: 36px;
    margin-top: 18px;
    border-radius: 0 6px 6px 0;
    background: linear-gradient(#a9d98d, #7fce4f 50%, #4fbf14 50%, #74f02c);
    box-shadow: 1px 0 2px #d7f2c5;
}
.hide-menu svg {
    width: 14px;
    height: 16px;
}
.edit-view,
.grid-view {
    align-self: flex-end;
    width: 20px;
    height: 44px;
    border-radius: 6px 0 0 6px;
    box-shadow: -1px 0 3px #c8ecb4;
}
.edit-view {
    margin-top: 24px;
    background: linear-gradient(#8a8a8a, #505050);
}
.edit-view svg {
    width: 18px;
    height: 34px;
}
.grid-view {
    margin-top: 11px;
    background: linear-gradient(#a9d98d, #7fce4f 50%, #4fbf14 50%, #74f02c);
}
.grid-view svg {
    width: 14px;
    height: 20px;
}

/* Right panel */
.right-panel {
    flex: 1;
    min-width: 0;
    display: flex;
    flex-direction: column;
    padding: 0 8px 9px;
    border-radius: 9px 0 0 0;
    background: linear-gradient(#a0a0a0, #505050 52px);
    box-shadow: 0 0 4px 1px #c8ecb4;
}
.toolbar {
    display: flex;
    align-items: center;
    height: 35px;
}
.toolbar button {
    display: flex;
    align-items: center;
    justify-content: center;
    width: 26px;
    height: 26px;
}
.toolbar svg {
    width: 23px;
    height: 23px;
}
.sep {
    width: 2px;
    height: 22px;
    margin: 0 7px;
    background: linear-gradient(90deg, #333 50%, #8a8a8a 50%);
}
.linked {
    display: flex;
    align-items: center;
    margin-left: auto;
}
.linked .pill {
    width: 95px;
    padding-left: 14px;
}
.linked svg {
    margin-left: -6px;
}
.tab-row {
    display: flex;
    align-items: flex-start;
    height: 28px;
    background:
        linear-gradient(#000, #000) 0 17px / 1px 100% no-repeat,
        linear-gradient(#000, #000) 100% 17px / 1px 100% no-repeat,
        linear-gradient(transparent 17px, #e8e8e8 17px);
}
.header-tab {
    width: 62px;
    height: 23px;
    margin: 4px 0 0 23px;
    border: 1px solid #333;
    border-bottom: none;
    border-radius: 4px 4px 0 0;
    background: linear-gradient(#fff, #f4f4f4);
    color: #000;
    font-weight: bold;
    line-height: 19px;
    text-align: center;
}
.title-tab {
    position: relative;
    display: flex;
    align-items: center;
    gap: 8px;
    width: 176px;
    height: 28px;
    margin: 0 40px 0 auto;
    padding-left: 24px;
    color: #a3a3a3;
    font-size: 15px;
    font-weight: bold;
}
.title-shape {
    position: absolute;
    left: 0;
    top: 0;
    width: 176px;
    height: 18px;
}
.title-tab span {
    position: relative;
    padding-right: 9px;
    border-right: 1px solid #b5b5b5;
    line-height: 20px;
    white-space: nowrap;
}
.title-tab .ob {
    position: relative;
    width: 18px;
    height: 18px;
    color: #7fac4c;
}
.content {
    flex: 1;
    min-height: 0;
    display: flex;
    flex-direction: column;
    background-color: #e8e8e8;
    border: solid #000;
    border-width: 0 1px 1px;
}
.subtabs {
    display: flex;
    align-items: center;
    height: 18px;
    margin: 2px 17px 3px;
    padding: 0 0 1px 10px;
    border: 1px solid #222;
    border-radius: 3px;
    background-color: #505050;
    color: #fff;
}
.subtabs a {
    padding: 0 4px 0 6px;
    border-right: 1px solid #222;
}
.subtabs a:last-child {
    border: none;
}
.scroll-area {
    flex: 1;
    min-height: 0;
    display: flex;
    overflow: hidden;
}
.form-body {
    flex: 1;
    padding: 22px 22px 0 17px;
}
.error-box {
    display: flex;
    gap: 14px;
    height: 74px;
    margin: 0 0 20px 5px;
    padding: 12px 17px;
    border: 1px solid #4a0c04;
    border-radius: 9px;
    background: linear-gradient(#8f1a08, #c62e16 16px);
    color: #f5c8c0;
    line-height: 15px;
}
.error-box svg {
    width: 26px;
    height: 26px;
    margin-top: 1px;
}
.error-box strong {
    font-size: 13px;
    color: #f2a79b;
}
.error-box p {
    margin: 0;
}

/* Form */
form {
    width: 870px;
    color: #3c3c3c;
}
.row {
    display: grid;
    grid-template-columns: 138px 280px 135px 280px;
    column-gap: 10px;
    align-items: center;
    height: 25px;
}
.row label {
    display: flex;
    justify-content: flex-end;
    white-space: nowrap;
}
.row label a {
    display: flex;
    align-items: center;
    gap: 2px;
    color: #1f82bd;
}
.row label svg {
    width: 7px;
    height: 8px;
}
.row input[type="text"],
.row select,
textarea {
    margin: 0;
    padding: 0 5px;
    height: 17px;
    border: 1px solid #848484;
    border-radius: 0;
    outline: none;
    background-color: #fff;
    color: #333;
    font: inherit;
}
.row input.required {
    background: linear-gradient(#ffedb5, #fff8dc);
}
.row input.readonly {
    background-color: #e8e8e8;
    color: #666;
    font-weight: bold;
}
.row .short {
    width: 135px;
}
.row .amount {
    text-align: right;
}
.row.tall {
    height: 66px;
}
.row.tall label {
    align-self: start;
    margin-top: 6px;
}
.row textarea {
    grid-column: 2 / 5;
    height: 60px;
    resize: none;
}
.select {
    display: flex;
    height: 17px;
    border: 1px solid #848484;
    background-color: #fff;
}
.row .select select {
    appearance: none;
    flex: 1;
    min-width: 0;
    height: 100%;
    border: none;
    background: none;
}
.select::after {
    content: "";
    width: 15px;
    border: 1px solid;
    border-color: #fff #848484 #848484 #fff;
    border-width: 1px 2px 2px 1px;
    background:
        linear-gradient(#000, #000) 3px 4px / 8px 1px no-repeat,
        linear-gradient(#000, #000) 4px 5px / 6px 1px no-repeat,
        linear-gradient(#000, #000) 5px 6px / 4px 1px no-repeat,
        linear-gradient(#000, #000) 6px 7px / 2px 1px no-repeat,
        #e8e4df;
}
.select.required {
    background-color: #fff3c8;
}
.select.readonly {
    background-color: #e8e8e8;
}
.select.readonly select {
    color: #666;
    font-weight: bold;
}
.select.focused {
    height: 19px;
    border: 2px solid #4795cb;
    background-color: #c5e7f8;
}
.row .select.focused select {
    padding-left: 4px;
    outline: 1px dotted #333;
    outline-offset: -1px;
}
.picker {
    display: flex;
    align-items: center;
    height: 25px;
}
.picker input {
    flex: 1;
    min-width: 0;
}
.picker button {
    position: relative;
    margin-right: -2px;
}
.picker button span {
    position: absolute;
    left: 4px;
    top: 4px;
    width: 17px;
    font: bold 11px/13px "DejaVu Sans Condensed", sans-serif;
}
.picker svg {
    width: 28px;
    height: 22px;
}
.row input[type="checkbox"] {
    appearance: none;
    width: 12px;
    height: 12px;
    margin: 0 0 3px 3px;
    border: 1px solid #6f6259;
    border-radius: 1px;
    background-color: #fff;
}
form h2 {
    display: flex;
    align-items: center;
    height: 36px;
    margin: 0;
    padding-top: 1px;
    font-size: 11px;
}
form h2 span {
    height: 18px;
    padding: 0 13px;
    border-radius: 9px;
    background-color: #8a8a8a;
    color: #fff;
    line-height: 18px;
}
form h2::after {
    content: "";
    flex: 1;
    height: 2px;
    background-color: #8a8a8a;
}
.close-button {
    position: relative;
    display: block;
    width: 80px;
    height: 20px;
    margin: 7px 0 0 400px;
    border: 1px solid #2e8a0e;
    border-radius: 0 10px 10px 0;
    background: linear-gradient(#c9efb4, #55c322 50%, #7be64a);
    color: #24440f;
    font-weight: bold;
}
.close-button svg {
    position: absolute;
    left: -11px;
    top: -5px;
    width: 27px;
    height: 26px;
}
.scrollbar {
    display: flex;
    flex-direction: column;
    width: 15px;
    border: 1px solid #a39991;
    border-radius: 2px;
    background-color: #dbd3cd;
}
.arrow {
    display: flex;
    align-items: center;
    justify-content: center;
    height: 14px;
    background-color: #f3f0ed;
}
.arrow svg {
    width: 8px;
    height: 6px;
}
.arrow .up {
    transform: rotate(180deg);
    opacity: .4;
}
.thumb {
    flex: 500;
    display: flex;
    flex-direction: column;
    align-items: center;
    justify-content: center;
    gap: 2px;
    border: solid #8f847b;
    border-width: 1px 0;
    background: linear-gradient(90deg, #fff, #e2dbd4);
}
.thumb i {
    width: 5px;
    height: 1px;
    background-color: #777;
}
.track {
    flex: 100;
    border-bottom: 1px solid #8f847b;
}

/* Status bar */
.statusbar {
    display: flex;
    align-items: center;
    gap: 15px;
    height: 24px;
    padding: 0 6px 3px 5px;
    border-top: 1px solid #cbbcae;
    white-space: nowrap;
}
.statusbar span {
    display: flex;
    align-items: center;
    gap: 6px;
}
.statusbar span svg {
    width: 16px;
    height: 11px;
}
.statusbar .plain {
    margin-left: 6px;
}
.status-icons {
    display: flex;
    align-items: center;
    gap: 6px;
    margin-left: auto;
}
.status-icons svg {
    width: 14px;
    height: 14px;
}
.status-icons .bug {
    width: 16px;
    height: 16px;
    margin-left: 5px;
}
```
